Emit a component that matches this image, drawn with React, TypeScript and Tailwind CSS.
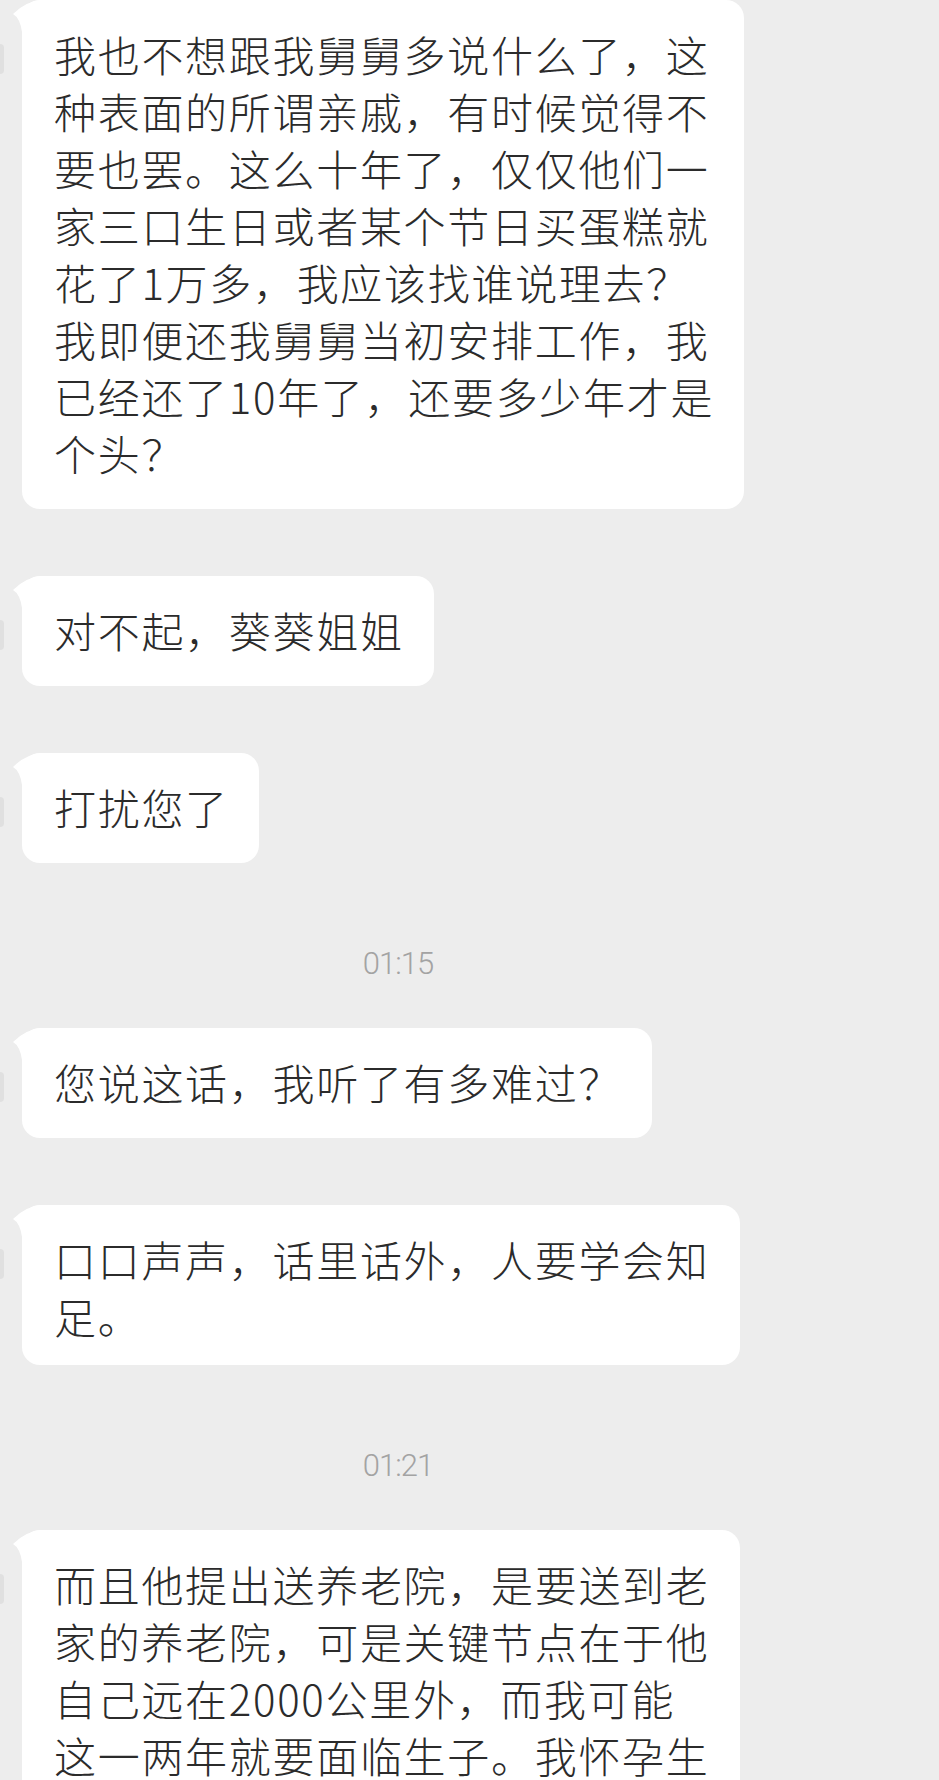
import * as React from 'react';

// --- Tipler ---
type ChatItem =
  | { id: string; kind: 'msg'; lines: string[]; tight?: boolean }
  | { id: string; kind: 'time'; text: string };

// --- Sohbet verisi ---
const items: ChatItem[] = [
  {
    id: 'm1',
    kind: 'msg',
    lines: [
      '我也不想跟我舅舅多说什么了，这',
      '种表面的所谓亲戚，有时候觉得不',
      '要也罢。这么十年了，仅仅他们一',
      '家三口生日或者某个节日买蛋糕就',
      '花了1万多，我应该找谁说理去？',
      '我即便还我舅舅当初安排工作，我',
      '已经还了10年了，还要多少年才是',
      '个头？',
    ],
  },
  { id: 'm2', kind: 'msg', lines: ['对不起，葵葵姐姐'] },
  { id: 'm3', kind: 'msg', lines: ['打扰您了'] },
  { id: 't1', kind: 'time', text: '01:15' },
  { id: 'm4', kind: 'msg', lines: ['您说这话，我听了有多难过？'] },
  { id: 'm5', kind: 'msg', lines: ['口口声声，话里话外，人要学会知', '足。'], tight: true },
  { id: 't2', kind: 'time', text: '01:21' },
  {
    id: 'm6',
    kind: 'msg',
    lines: [
      '而且他提出送养老院，是要送到老',
      '家的养老院，可是关键节点在于他',
      '自己远在2000公里外，而我可能',
      '这一两年就要面临生子。我怀孕生',
    ],
  },
];

export default function App() {
  return (
    <div className="h-[1780px] w-[939px] overflow-hidden bg-[#ededed]">
      {items.map((it, i) => {
        if (it.kind === 'time') {
          return (
            <div
              key={it.id}
              className="mt-[81px] h-[40px] w-[796px] text-center font-[family-name:Roboto,sans-serif] text-[31px] font-light leading-[40px] tracking-[-1px] text-[#a3a3a3]"
            >
              {it.text}
            </div>
          );
        }
        const prev = items[i - 1];
        const top = i === 0 ? 'mt-0' : prev.kind === 'time' ? 'mt-[44px]' : 'mt-[67px]';
        return <Bubble key={it.id} lines={it.lines} tight={it.tight} className={top} />;
      })}
    </div>
  );
}

/* ---------------- Mesaj balonu ---------------- */

function Bubble({
  lines,
  className,
  tight,
}: {
  lines: string[];
  className: string;
  tight?: boolean;
}) {
  return (
    <div className={`flex items-start ${className}`}>
      {/* kesilmiş avatar kenarı */}
      <div className="mt-[44px] h-[30px] w-[4px] rounded-r-sm bg-[#e0e0e0]" />
      <div
        className={`relative ml-[18px] rounded-[18px] bg-white pl-[32px] pr-[30px] pt-[25px] font-[family-name:Noto_Sans_CJK_SC,sans-serif] text-[42px] font-light leading-[57px] tracking-[1.7px] text-[#2b2b2b] ${
          tight ? 'pb-[21px]' : 'pb-[28px]'
        }`}
      >
        {/* sol üst kuyruk */}
        <svg
          className="absolute left-[-10px] top-0 h-[32px] w-[30px] overflow-visible"
          viewBox="0 0 30 32"
        >
          <path d="M30 0 Q14 1 1 14 Q8 18 10 32 L30 32 Z" fill="#ffffff" />
        </svg>
        {lines.map((l, k) => (
          <div key={k} className="relative whitespace-nowrap">
            {l}
          </div>
        ))}
      </div>
    </div>
  );
}
